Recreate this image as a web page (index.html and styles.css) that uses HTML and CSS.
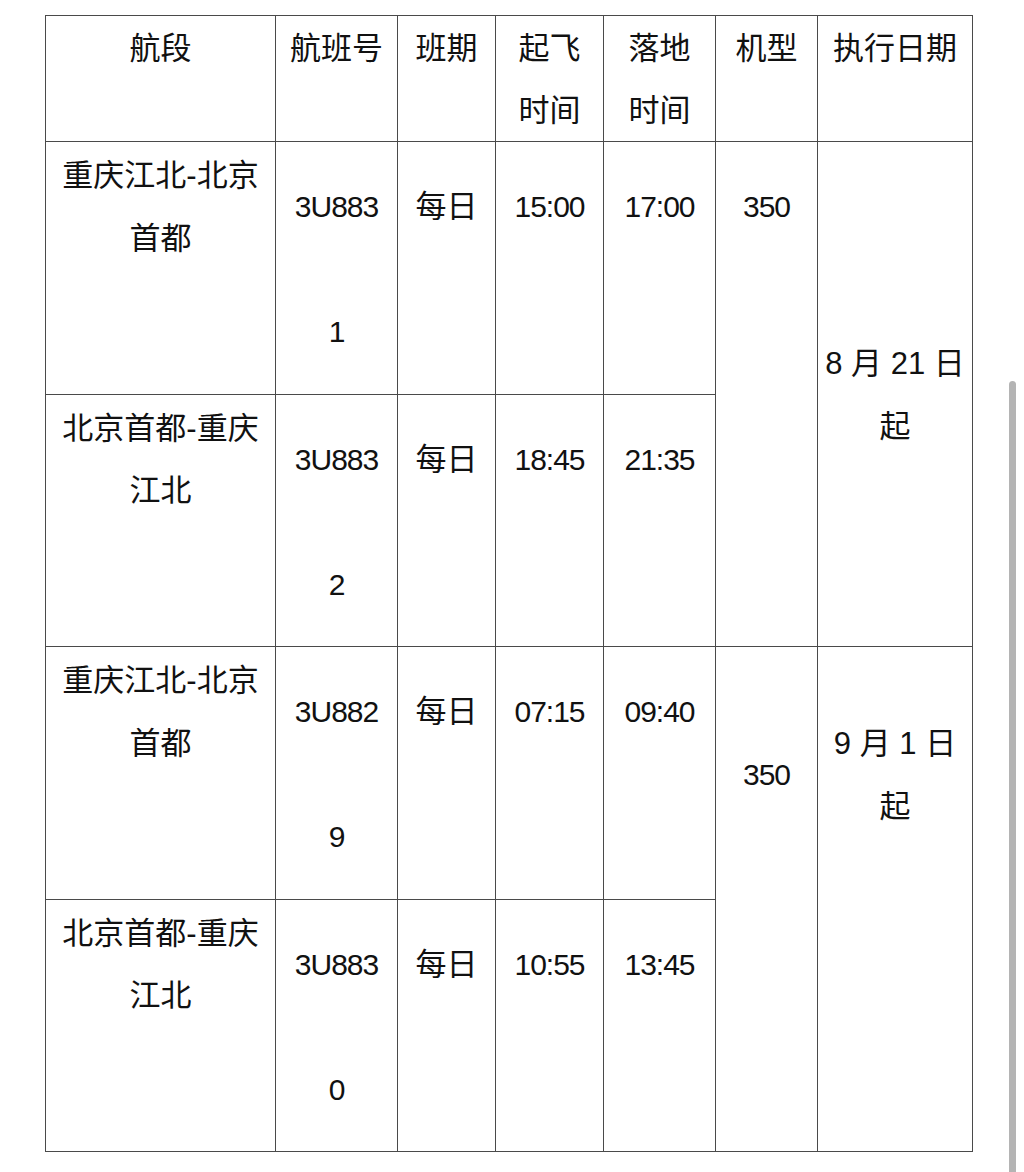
FILE: index.html
```html
<!DOCTYPE html>
<html lang="zh-CN">
<head>
<meta charset="utf-8">
<title>航班时刻表</title>
<link rel="stylesheet" href="styles.css">
</head>
<body>
<div class="page">
  <table class="sched">
    <colgroup>
      <col class="c-seg">
      <col class="c-no">
      <col class="c-day">
      <col class="c-dep">
      <col class="c-arr">
      <col class="c-type">
      <col class="c-date">
    </colgroup>
    <thead>
      <tr>
        <th>航段</th>
        <th>航班号</th>
        <th>班期</th>
        <th>起飞<br>时间</th>
        <th>落地<br>时间</th>
        <th>机型</th>
        <th>执行日期</th>
      </tr>
    </thead>
    <tbody>
      <tr>
        <td class="seg">重庆江北-北京<br>首都</td>
        <td class="flt"><span class="num">3U883</span><br><br><span class="num">1</span></td>
        <td class="off">每日</td>
        <td class="off"><span class="num">15:00</span></td>
        <td class="off"><span class="num">17:00</span></td>
        <td class="off" rowspan="2"><span class="num">350</span></td>
        <td class="mid" rowspan="2">8 月 21 日<br>起</td>
      </tr>
      <tr>
        <td class="seg">北京首都-重庆<br>江北</td>
        <td class="flt"><span class="num">3U883</span><br><br><span class="num">2</span></td>
        <td class="off">每日</td>
        <td class="off"><span class="num">18:45</span></td>
        <td class="off"><span class="num">21:35</span></td>
      </tr>
      <tr>
        <td class="seg">重庆江北-北京<br>首都</td>
        <td class="flt"><span class="num">3U882</span><br><br><span class="num">9</span></td>
        <td class="off">每日</td>
        <td class="off"><span class="num">07:15</span></td>
        <td class="off"><span class="num">09:40</span></td>
        <td class="off3" rowspan="2"><span class="num">350</span></td>
        <td class="off2" rowspan="2">9 月 1 日<br>起</td>
      </tr>
      <tr>
        <td class="seg">北京首都-重庆<br>江北</td>
        <td class="flt"><span class="num">3U883</span><br><br><span class="num">0</span></td>
        <td class="off">每日</td>
        <td class="off"><span class="num">10:55</span></td>
        <td class="off"><span class="num">13:45</span></td>
      </tr>
    </tbody>
  </table>
</div>
<div class="scroll-thumb"></div>
</body>
</html>
```

FILE: styles.css
```css
html, body {
  margin: 0;
  padding: 0;
  background: #ffffff;
}

body {
  font-family: "Liberation Sans", "Noto Sans CJK SC", sans-serif;
  color: #111111;
}

.page {
  padding: 15px 0 0 45px;
}

.sched {
  border-collapse: collapse;
  table-layout: fixed;
  width: 927px;
}

.c-seg { width: 230px; }
.c-no { width: 122px; }
.c-day { width: 98px; }
.c-dep { width: 108px; }
.c-arr { width: 112px; }
.c-type { width: 102px; }
.c-date { width: 155px; }

.sched th,
.sched td {
  border: 1px solid #4a4a4a;
  padding: 0 4px;
  text-align: center;
  vertical-align: top;
  font-size: 31px;
  font-weight: normal;
  line-height: 62.5px;
  white-space: nowrap;
}

.sched th {
  padding-top: 2px;
  line-height: 61.5px;
}

.sched td.seg {
  padding-top: 3px;
}

.sched td.flt {
  padding-top: 34px;
  padding-bottom: 30px;
}

.sched td.off {
  padding-top: 34px;
}

.sched td.off2 {
  padding-top: 66px;
}

.sched td.off3 {
  padding-top: 97px;
}

.sched td.mid {
  vertical-align: middle;
  padding-top: 3px;
}

.num {
  font-size: 30px;
  letter-spacing: -1px;
}

.scroll-thumb {
  position: fixed;
  top: 381px;
  right: 8px;
  width: 7px;
  height: 820px;
  border-radius: 4px;
  background: #b4b4b4;
}
```
